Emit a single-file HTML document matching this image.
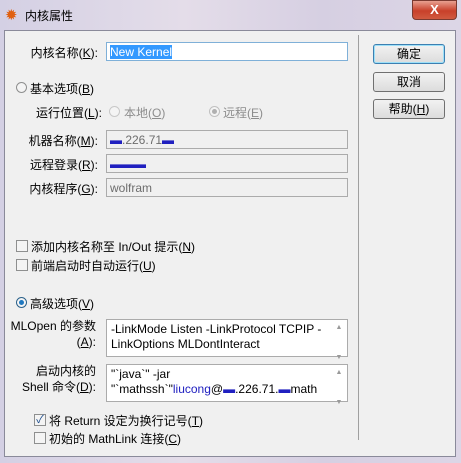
<!DOCTYPE html><html><head><meta charset="utf-8"><style>
body{margin:0;width:461px;height:463px;overflow:hidden;font-family:"Liberation Sans","Noto Sans CJK SC",sans-serif;font-size:12px;color:#000}
#f{position:absolute;left:0;top:0;width:461px;height:463px;background:linear-gradient(90deg,#d4d0e4,#e4dde9 40%,#d6cfe2 70%,#dcd6e6);}
#c{position:absolute;left:4px;top:30px;width:452px;height:427px;background:#f0f0f0;border:1px solid #8a8a9a;box-sizing:border-box}
.a{position:absolute;white-space:nowrap}
.r{text-align:right}
.in{position:absolute;left:106px;width:242px;height:19px;border:1px solid #ababab;box-sizing:border-box;background:#f0f0f0;color:#6d6d6d;padding:2px 3px;font-size:12px}
.btn{position:absolute;left:373px;width:72px;height:20px;border:1px solid #707070;border-radius:3px;box-sizing:border-box;background:linear-gradient(#f2f2f2,#dcdcdc);text-align:center;line-height:18px}
.rad{position:absolute;width:11px;height:11px;border:1px solid #8e8f8f;border-radius:50%;background:#f4f4f4;box-sizing:border-box}
.cb{position:absolute;width:12px;height:12px;border:1px solid #8e8f8f;background:#f4f4f4;box-sizing:border-box}
.ta{position:absolute;left:106px;width:242px;height:38px;border:1px solid #ababab;box-sizing:border-box;background:#fff;padding:2px 4px;line-height:15px}
.sb{position:absolute;right:0;top:0;width:16px;height:100%;color:#999;font-size:7px;text-align:center}
</style></head><body><div id="f">
<div class="a" style="left:5px;top:6px;color:#e06010;font-size:15px">✹</div>
<div class="a" style="left:25px;top:7px;font-size:12px">内核属性</div>
<div class="a" style="left:412px;top:0;width:45px;height:20px;border-radius:0 0 4px 4px;background:linear-gradient(#e8a090,#c8402a 55%,#d05a40);border:1px solid #7a3a30;box-sizing:border-box;color:#fff;font-weight:bold;text-align:center;line-height:18px;font-size:13px">X</div>
<div id="c"></div>
<div class="a" style="left:358px;top:35px;width:1px;height:405px;background:#a0a0a0"></div>
<div class="a r" style="left:20px;width:78px;top:44px">内核名称(<u>K</u>):</div>
<div class="in" style="top:42px;background:#fff;border-color:#7fb0d8;color:#fff"><span style="background:#3399ff">New Kernel</span></div>
<div class="btn" style="top:44px;border-color:#3c7fb1;box-shadow:inset 0 0 0 1px #9de0f8">确定</div>
<div class="btn" style="top:72px">取消</div>
<div class="btn" style="top:99px">帮助(<u>H</u>)</div>
<div class="rad" style="left:16px;top:82px"></div>
<div class="a" style="left:30px;top:80px">基本选项(<u>B</u>)</div>
<div class="a r" style="left:20px;width:82px;top:104px">运行位置(<u>L</u>):</div>
<div class="rad" style="left:109px;top:106px;border-color:#c8c8c8"></div>
<div class="a" style="left:124px;top:104px;color:#8d8d8d">本地(<u>O</u>)</div>
<div class="rad" style="left:209px;top:106px;border-color:#c0c0c0"><div style="position:absolute;left:2px;top:2px;width:5px;height:5px;border-radius:50%;background:#b0b0b0"></div></div>
<div class="a" style="left:223px;top:104px;color:#8d8d8d">远程(<u>E</u>)</div>
<div class="a r" style="left:20px;width:78px;top:132px">机器名称(<u>M</u>):</div>
<div class="in" style="top:130px"><span style="color:#2020c0">▬</span>.226.71<span style="color:#2020c0">▬</span></div>
<div class="a r" style="left:20px;width:78px;top:156px">远程登录(<u>R</u>):</div>
<div class="in" style="top:154px;color:#2020c0">▬▬▬</div>
<div class="a r" style="left:20px;width:78px;top:180px">内核程序(<u>G</u>):</div>
<div class="in" style="top:178px">wolfram</div>
<div class="cb" style="left:16px;top:240px"></div>
<div class="a" style="left:31px;top:238px">添加内核名称至 In/Out 提示(<u>N</u>)</div>
<div class="cb" style="left:16px;top:259px"></div>
<div class="a" style="left:31px;top:257px">前端启动时自动运行(<u>U</u>)</div>
<div class="rad" style="left:16px;top:297px;border-color:#2c628b"><div style="position:absolute;left:2px;top:2px;width:5px;height:5px;border-radius:50%;background:#1f78c0"></div></div>
<div class="a" style="left:30px;top:295px">高级选项(<u>V</u>)</div>
<div class="a r" style="left:10px;width:86px;top:318px;line-height:16px">MLOpen 的参数<br>(<u>A</u>):</div>
<div class="ta" style="top:319px">-LinkMode Listen -LinkProtocol TCPIP -<br>LinkOptions MLDontInteract<div class="sb">▲<br><br>▼</div></div>
<div class="a r" style="left:10px;width:86px;top:363px;line-height:16px">启动内核的<br>Shell 命令(<u>D</u>):</div>
<div class="ta" style="top:364px">"`java`" -jar<br>"`mathssh`"<span style="color:#2020c0">liucong</span>@<span style="color:#2020c0">▬</span>.226.71.<span style="color:#2020c0">▬</span>math<div class="sb">▲<br><br>▼</div></div>
<div class="cb" style="left:34px;top:414px;font-size:11px;line-height:10px;color:#1c4c8c;text-align:center">✓</div>
<div class="a" style="left:49px;top:412px">将 Return 设定为换行记号(<u>T</u>)</div>
<div class="cb" style="left:34px;top:432px"></div>
<div class="a" style="left:49px;top:430px">初始的 MathLink 连接(<u>C</u>)</div>
</div></body></html>
